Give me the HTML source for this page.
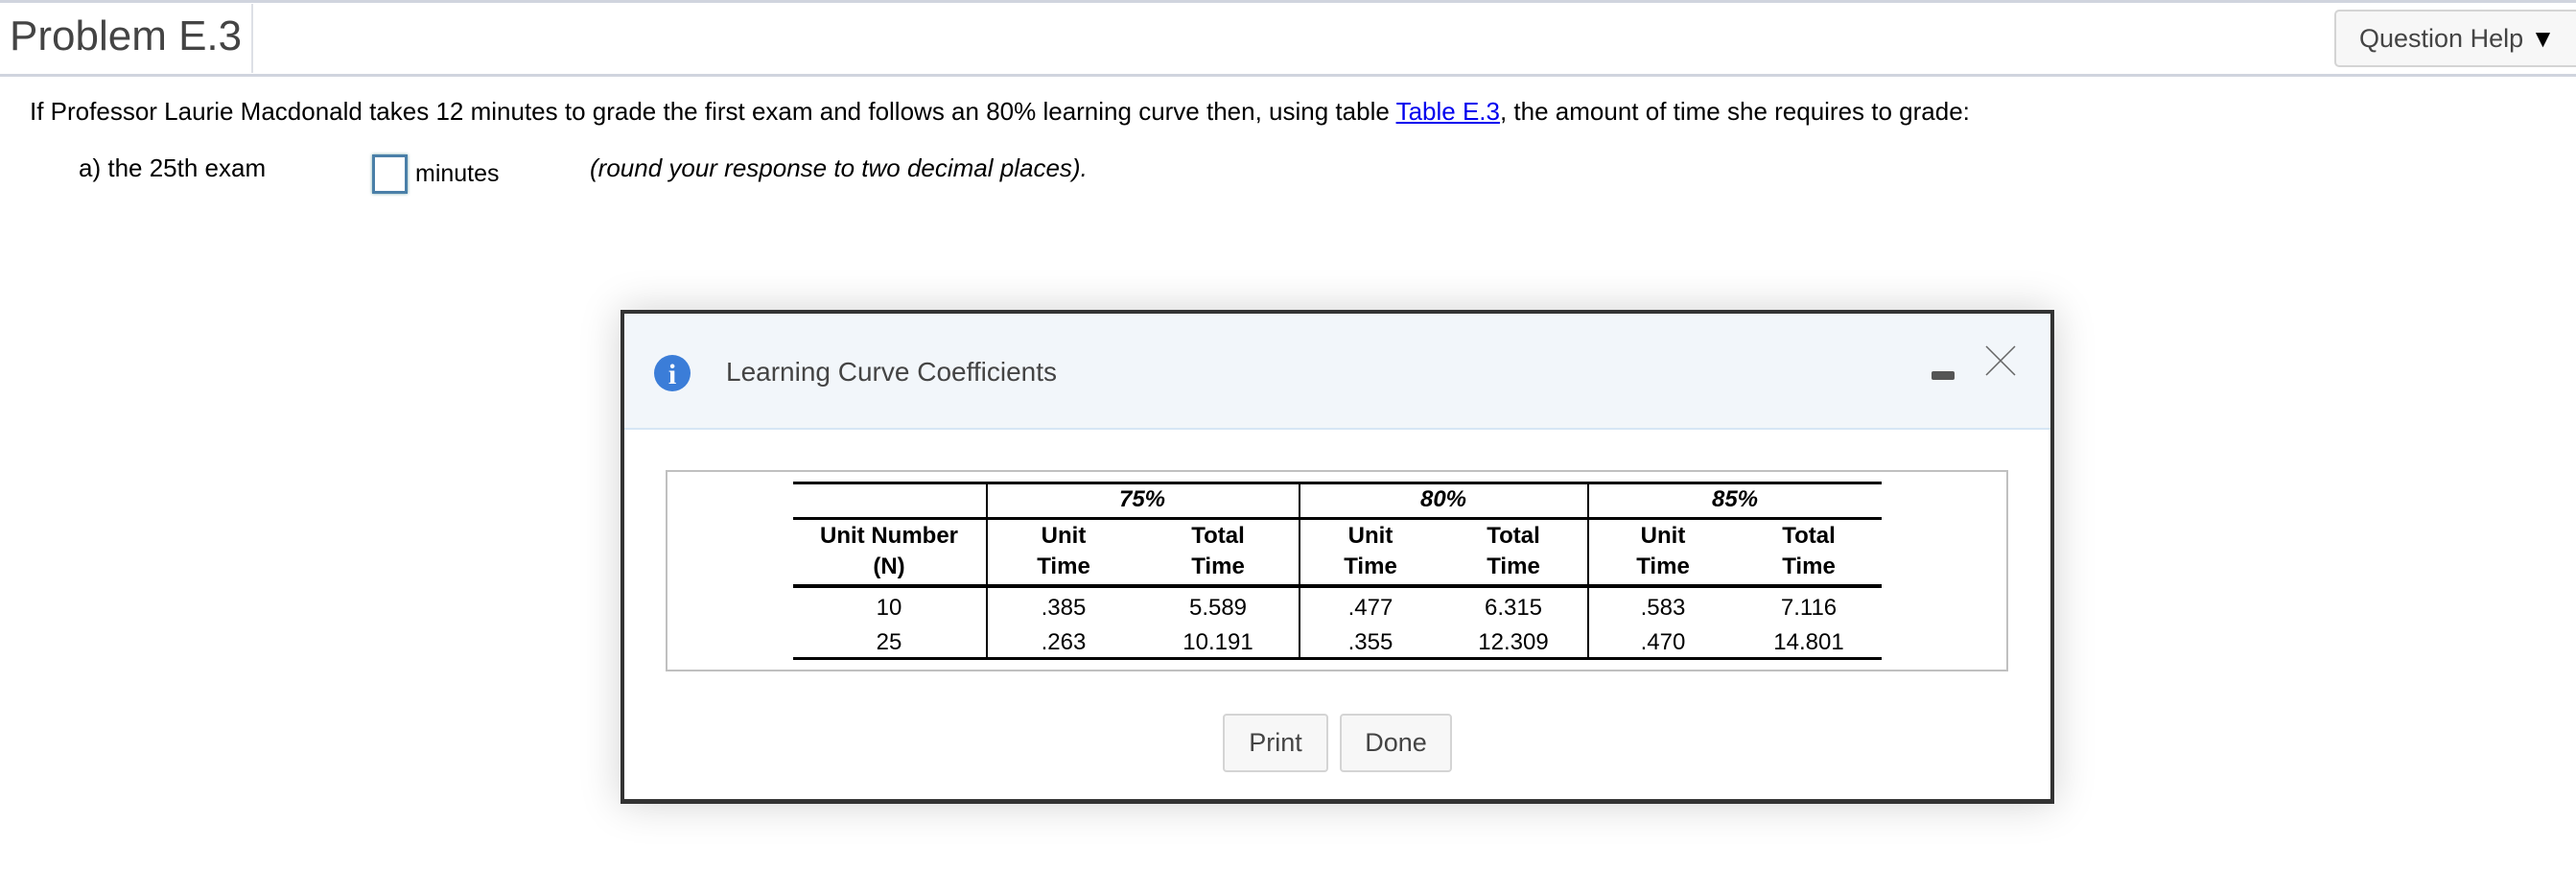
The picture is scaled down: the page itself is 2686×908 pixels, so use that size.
<!DOCTYPE html>
<html><head><meta charset="utf-8"><style>
*{margin:0;padding:0;box-sizing:border-box}
body{width:2686px;height:908px;background:#fff;font-family:"Liberation Sans",Arial,sans-serif;position:relative;overflow:hidden;color:#000}
.a{position:absolute;white-space:nowrap}
</style></head><body>
<div class="a" style="left:0;top:0;width:2686px;height:3px;background:#d0d4de"></div>
<div class="a" style="left:10px;top:12px;font-size:44px;color:#444;line-height:52px">Problem E.3</div>
<div class="a" style="left:262px;top:4px;width:2px;height:72px;background:#dde0e6"></div>
<div class="a" style="left:0;top:77px;width:2686px;height:3px;background:#d0d4de"></div>
<div class="a" style="left:2434px;top:10px;width:260px;height:60px;border:2px solid #d4d4d4;border-radius:5px;background:#f7f7f7;font-size:27px;color:#444;line-height:56px;padding-left:24px">Question Help <span style="font-size:26px;color:#000">▼</span></div>
<div class="a" style="left:31px;top:101px;font-size:26px;line-height:30px">If Professor Laurie Macdonald takes 12 minutes to grade the first exam and follows an 80% learning curve then, using table <span style="color:#0000ee;text-decoration:underline">Table E.3</span>, the amount of time she requires to grade:</div>
<div class="a" style="left:82px;top:160px;font-size:26px;line-height:30px">a) the 25th exam</div>
<div class="a" style="left:388px;top:161px;width:37px;height:41px;border:3px solid #4a7fa8;box-shadow:0 0 3px #7aa"></div>
<div class="a" style="left:433px;top:166px;font-size:25px;line-height:30px">minutes</div>
<div class="a" style="left:615px;top:160px;font-size:26px;line-height:30px;font-style:italic">(round your response to two decimal places).</div>

<div class="a" style="left:647px;top:323px;width:1495px;height:515px;border:4px solid #333;border-bottom-width:5px;background:#fff;box-shadow:0 0 40px rgba(0,0,0,0.18)">
 <div class="a" style="left:0;top:0;width:1487px;height:121px;background:#f2f6fa;border-bottom:2px solid #d6e6f5"></div>
 <svg class="a" style="left:30px;top:42px" width="40" height="40" viewBox="0 0 40 40"><circle cx="20" cy="20" r="19" fill="#3b7dd8"/><text x="20" y="31" text-anchor="middle" font-family="Liberation Serif" font-weight="bold" font-size="30" fill="#fff">i</text></svg>
 <div class="a" style="left:106px;top:43px;font-size:28px;color:#444;line-height:36px">Learning Curve Coefficients</div>
 <div class="a" style="left:1363px;top:60px;width:24px;height:9px;background:#555;border-radius:2px"></div>
 <svg class="a" style="left:1418px;top:32px" width="34" height="34"><path d="M2 2L32 32M32 2L2 32" stroke="#666" stroke-width="1.5"/></svg>
 <div class="a" style="left:43px;top:163px;width:1400px;height:210px;border:2px solid #c0c0c0"></div>
</div>
<div class="a" style="left:827px;top:502px;width:1135px;height:3px;background:#000"></div>
<div class="a" style="left:827px;top:539px;width:1135px;height:3px;background:#000"></div>
<div class="a" style="left:827px;top:609px;width:1135px;height:4px;background:#000"></div>
<div class="a" style="left:827px;top:685px;width:1135px;height:3px;background:#000"></div>
<div class="a" style="left:1028px;top:502px;width:2px;height:186px;background:#000"></div>
<div class="a" style="left:1354px;top:502px;width:2px;height:186px;background:#000"></div>
<div class="a" style="left:1655px;top:502px;width:2px;height:186px;background:#000"></div>
<div style="font-size:24px;line-height:30px">
<div class="a" style="left:1191px;top:506px;width:0;font-weight:bold;font-style:italic"><span style="position:absolute;transform:translateX(-50%)">75%</span></div>
<div class="a" style="left:1505px;top:506px;width:0;font-weight:bold;font-style:italic"><span style="position:absolute;transform:translateX(-50%)">80%</span></div>
<div class="a" style="left:1809px;top:506px;width:0;font-weight:bold;font-style:italic"><span style="position:absolute;transform:translateX(-50%)">85%</span></div>
<div class="a" style="left:927px;top:543px;width:0;font-weight:bold;text-align:center"><span style="position:absolute;transform:translateX(-50%);line-height:32px">Unit Number<br>(N)</span></div>
<div class="a" style="left:1109px;top:543px;width:0;font-weight:bold"><span style="position:absolute;transform:translateX(-50%);line-height:32px;text-align:center">Unit<br>Time</span></div>
<div class="a" style="left:1270px;top:543px;width:0;font-weight:bold"><span style="position:absolute;transform:translateX(-50%);line-height:32px;text-align:center">Total<br>Time</span></div>
<div class="a" style="left:1429px;top:543px;width:0;font-weight:bold"><span style="position:absolute;transform:translateX(-50%);line-height:32px;text-align:center">Unit<br>Time</span></div>
<div class="a" style="left:1578px;top:543px;width:0;font-weight:bold"><span style="position:absolute;transform:translateX(-50%);line-height:32px;text-align:center">Total<br>Time</span></div>
<div class="a" style="left:1734px;top:543px;width:0;font-weight:bold"><span style="position:absolute;transform:translateX(-50%);line-height:32px;text-align:center">Unit<br>Time</span></div>
<div class="a" style="left:1886px;top:543px;width:0;font-weight:bold"><span style="position:absolute;transform:translateX(-50%);line-height:32px;text-align:center">Total<br>Time</span></div>
<div class="a" style="left:927px;top:616px;width:0"><span style="position:absolute;transform:translateX(-50%);line-height:36px;text-align:center">10<br>25</span></div>
<div class="a" style="left:1109px;top:616px;width:0"><span style="position:absolute;transform:translateX(-50%);line-height:36px;text-align:center">.385<br>.263</span></div>
<div class="a" style="left:1270px;top:616px;width:0"><span style="position:absolute;transform:translateX(-50%);line-height:36px;text-align:center">5.589<br>10.191</span></div>
<div class="a" style="left:1429px;top:616px;width:0"><span style="position:absolute;transform:translateX(-50%);line-height:36px;text-align:center">.477<br>.355</span></div>
<div class="a" style="left:1578px;top:616px;width:0"><span style="position:absolute;transform:translateX(-50%);line-height:36px;text-align:center">6.315<br>12.309</span></div>
<div class="a" style="left:1734px;top:616px;width:0"><span style="position:absolute;transform:translateX(-50%);line-height:36px;text-align:center">.583<br>.470</span></div>
<div class="a" style="left:1886px;top:616px;width:0"><span style="position:absolute;transform:translateX(-50%);line-height:36px;text-align:center">7.116<br>14.801</span></div>
</div>
<div class="a" style="left:1275px;top:744px;width:110px;height:61px;border:2px solid #d4d4d4;border-radius:4px;background:#f7f7f7;font-size:27px;color:#444;line-height:57px;text-align:center">Print</div>
<div class="a" style="left:1397px;top:744px;width:117px;height:61px;border:2px solid #d4d4d4;border-radius:4px;background:#f7f7f7;font-size:27px;color:#444;line-height:57px;text-align:center">Done</div>
</body></html>
